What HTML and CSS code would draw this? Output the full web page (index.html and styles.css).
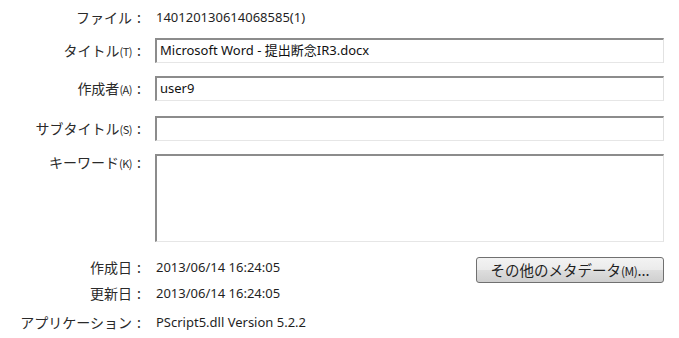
FILE: index.html
```html
<!DOCTYPE html>
<html lang="ja">
<head>
<meta charset="utf-8">
<link rel="stylesheet" href="styles.css">
</head>
<body>
<div class="props">
  <div class="row row-file">
    <div class="label">ファイル<span class="colon">:</span></div>
    <div class="value">140120130614068585(1)</div>
  </div>
  <div class="row row-title">
    <div class="label">タイトル<span class="key">(T)</span><span class="colon">:</span></div>
    <div class="field">Microsoft Word - 提出断念IR3.docx</div>
  </div>
  <div class="row row-author">
    <div class="label">作成者<span class="key">(A)</span><span class="colon">:</span></div>
    <div class="field">user9</div>
  </div>
  <div class="row row-sub">
    <div class="label">サブタイトル<span class="key">(S)</span><span class="colon">:</span></div>
    <div class="field"></div>
  </div>
  <div class="row row-kw">
    <div class="label">キーワード<span class="key">(K)</span><span class="colon">:</span></div>
    <div class="field area"></div>
  </div>
  <div class="row row-created">
    <div class="label">作成日<span class="colon">:</span></div>
    <div class="value split">
      <span>2013/06/14 16:24:05</span>
      <button class="btn">その他のメタデータ<span class="key">(M)</span>...</button>
    </div>
  </div>
  <div class="row row-mod">
    <div class="label">更新日<span class="colon">:</span></div>
    <div class="value">2013/06/14 16:24:05</div>
  </div>
  <div class="row row-app">
    <div class="label">アプリケーション<span class="colon">:</span></div>
    <div class="value">PScript5.dll Version 5.2.2</div>
  </div>
</div>
</body>
</html>
```

FILE: styles.css
```css
html, body {
  margin: 0;
  padding: 0;
  background: #ffffff;
}
body {
  font-family: "Noto Sans", "Noto Sans CJK JP", sans-serif;
  color: #1f1f1f;
  width: 679px;
  height: 338px;
  overflow: hidden;
}
.props {
  display: flex;
  flex-direction: column;
  padding-top: 7px;
}
.row {
  display: grid;
  grid-template-columns: 146px 509px;
  column-gap: 9px;
  align-items: center;
}
.label {
  font-family: "Noto Sans CJK JP", sans-serif;
  font-size: 14px;
  line-height: 20px;
  text-align: right;
  color: #2a2a2a;
  white-space: nowrap;
}
.key {
  font-size: 11px;
  letter-spacing: -0.5px;
}
.colon {
  display: inline-block;
  width: 14px;
  text-align: center;
}
.value {
  font-size: 13px;
  line-height: 20px;
  padding-left: 1px;
  white-space: nowrap;
}
.split {
  display: flex;
  justify-content: space-between;
  align-items: flex-start;
}
.field {
  box-sizing: border-box;
  height: 25px;
  border-style: solid;
  border-width: 2px 1px 1px 2px;
  border-color: #8c8c8c #e2e2e2 #e6e6e6 #8c8c8c;
  padding: 0 3px;
  font-size: 13px;
  line-height: 21px;
  white-space: nowrap;
  color: #111;
}
.row-title { margin-top: 11px; }
.row-author { margin-top: 13px; }
.row-sub { margin-top: 15px; }
.row-kw { margin-top: 13px; align-items: start; }
.row-kw .label { margin-top: -2px; }
.area { height: 88px; }
.row-created { margin-top: 15px; align-items: start; }
.row-mod { margin-top: 0; }
.row-app { margin-top: 9px; }
.btn {
  box-sizing: border-box;
  width: 188px;
  height: 26px;
  border: 1px solid #707070;
  border-radius: 3px;
  background: linear-gradient(#f3f3f3 0%, #ebebeb 48%, #dddddd 52%, #cfcfcf 100%);
  font-family: "Noto Sans CJK JP", sans-serif;
  font-size: 14.5px;
  color: #1f1f1f;
  padding: 0;
  line-height: 22px;
}
.btn .key {
  font-size: 12px;
}
```
